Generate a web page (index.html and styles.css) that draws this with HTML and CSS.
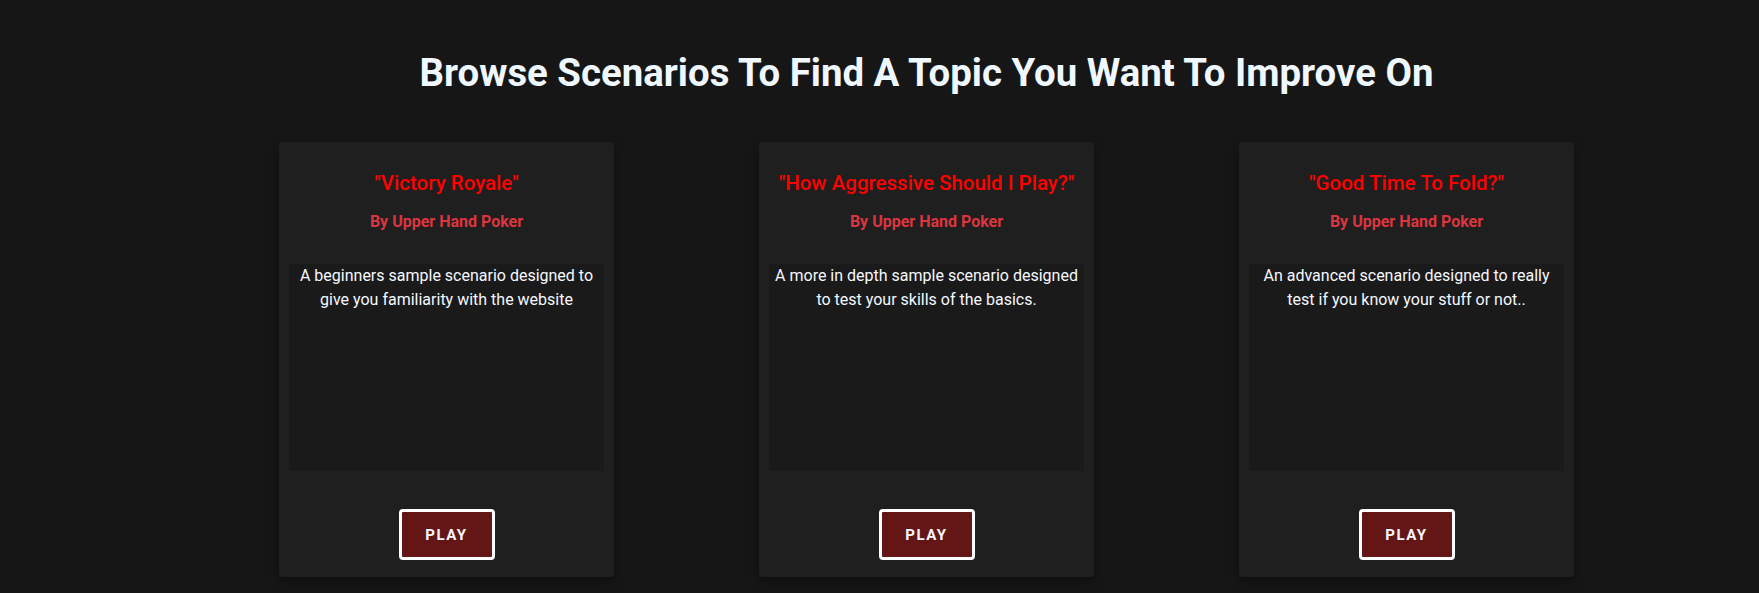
FILE: index.html
```html
<!DOCTYPE html>
<html lang="en">
<head>
<meta charset="utf-8">
<title>Browse Scenarios</title>
<link rel="stylesheet" href="styles.css">
</head>
<body>
<main class="page">
  <h1 class="page-title">Browse Scenarios To Find A Topic You Want To Improve On</h1>
  <section class="cards">
    <article class="card">
      <h2 class="card-title">"Victory Royale"</h2>
      <p class="card-author">By Upper Hand Poker</p>
      <div class="card-desc">A beginners sample scenario designed to give you familiarity with the website</div>
      <button class="play-btn">PLAY</button>
    </article>
    <article class="card">
      <h2 class="card-title">"How Aggressive Should I Play?"</h2>
      <p class="card-author">By Upper Hand Poker</p>
      <div class="card-desc">A more in depth sample scenario designed to test your skills of the basics.</div>
      <button class="play-btn">PLAY</button>
    </article>
    <article class="card">
      <h2 class="card-title">"Good Time To Fold?"</h2>
      <p class="card-author">By Upper Hand Poker</p>
      <div class="card-desc">An advanced scenario designed to really test if you know your stuff or not..</div>
      <button class="play-btn">PLAY</button>
    </article>
  </section>
</main>
</body>
</html>
```
FILE: styles.css
```css
html, body {
  margin: 0;
  padding: 0;
  background: #161616;
  font-family: Roboto, "Liberation Sans", Arial, sans-serif;
}

.page {
  padding: 50px 0 0 94px;
  min-height: 593px;
  box-sizing: border-box;
}

.page-title {
  margin: 0;
  text-align: center;
  font-size: 38.4px;
  line-height: 45px;
  font-weight: 700;
  color: #f0f8ff;
}

.cards {
  display: flex;
  justify-content: center;
  gap: 145px;
  margin-top: 47px;
}

.card {
  width: 335px;
  box-sizing: border-box;
  padding: 29px 10px 17px;
  background: #1f1f1f;
  border-radius: 4px;
  box-shadow: 0 4px 12px rgba(0, 0, 0, 0.35);
  display: flex;
  flex-direction: column;
  align-items: center;
  text-align: center;
}

.card-title {
  margin: 0;
  font-size: 20.5px;
  line-height: 24px;
  font-weight: 500;
  color: #ff0000;
}

.card-author {
  margin: 17px 0 0;
  font-size: 16px;
  line-height: 19px;
  font-weight: 700;
  color: #dc3540;
}

.card-desc {
  margin-top: 33px;
  width: 100%;
  height: 207px;
  box-sizing: border-box;
  padding: 0 6px;
  background: #1a1a1a;
  color: #f5f8ff;
  font-size: 16px;
  line-height: 24px;
}

.play-btn {
  margin-top: 38px;
  width: 96px;
  height: 51px;
  box-sizing: border-box;
  background: #641616;
  border: 3px solid #ffffff;
  border-radius: 4px;
  color: #f5f8ff;
  font-family: Roboto, "Liberation Sans", Arial, sans-serif;
  font-size: 15px;
  font-weight: 700;
  letter-spacing: 1.5px;
  padding: 0;
  cursor: pointer;
}
```
